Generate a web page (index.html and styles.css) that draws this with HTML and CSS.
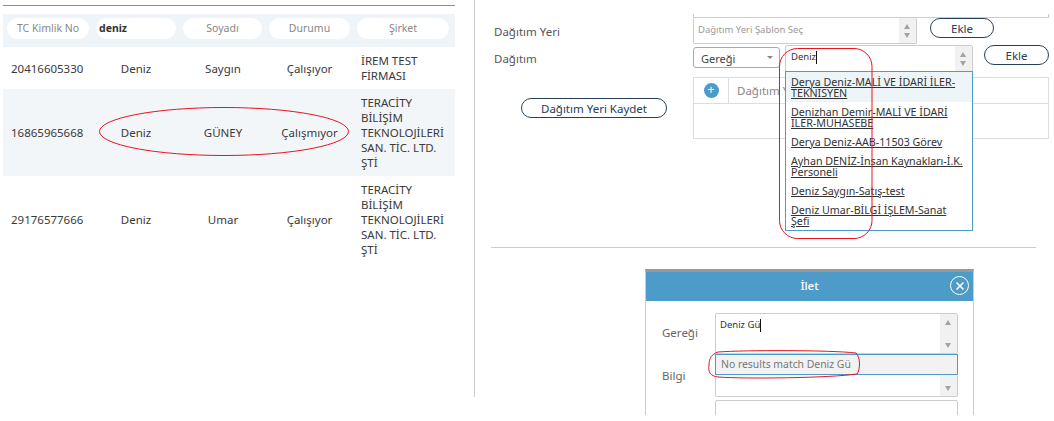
FILE: index.html
```html
<!DOCTYPE html>
<html lang="en">
<head>
    <meta charset="UTF-8">
    <title>Dağıtım</title>
    <link rel="stylesheet" href="styles.css">
</head>
<body>
    <div class="page">
        <!-- left: search results -->
        <section class="left">
            <div class="results-wrap">
                <table class="results">
                    <thead>
                        <tr>
                            <th><span class="pill">TC Kimlik No</span></th>
                            <th><span class="pill pill-typed">deniz</span></th>
                            <th><span class="pill">Soyadı</span></th>
                            <th><span class="pill">Durumu</span></th>
                            <th><span class="pill">Şirket</span></th>
                        </tr>
                    </thead>
                    <tbody>
                        <tr>
                            <td class="tc">20416605330</td><td>Deniz</td><td>Saygın</td><td>Çalışıyor</td>
                            <td class="company">İREM TEST FİRMASI</td>
                        </tr>
                        <tr class="alt">
                            <td class="tc">16865965668</td><td>Deniz</td><td>GÜNEY</td><td>Çalışmıyor</td>
                            <td class="company">TERACİTY BİLİŞİM TEKNOLOJİLERİ SAN. TİC. LTD. ŞTİ</td>
                        </tr>
                        <tr>
                            <td class="tc">29176577666</td><td>Deniz</td><td>Umar</td><td>Çalışıyor</td>
                            <td class="company">TERACİTY BİLİŞİM TEKNOLOJİLERİ SAN. TİC. LTD. ŞTİ</td>
                        </tr>
                    </tbody>
                </table>
            </div>
        </section>

        <!-- right: form and dialog -->
        <section class="right">
            <div class="form">
                <div class="labels">
                    <div class="label-yer">Dağıtım Yeri</div>
                    <div class="label-dag">Dağıtım</div>
                    <button class="btn btn-save">Dağıtım Yeri Kaydet</button>
                </div>
                <div class="fields">
                    <div class="frame-end"></div>
                    <div class="row-sablon">
                        <div class="listbox listbox-sablon">
                            <span class="placeholder">Dağıtım Yeri Şablon Seç</span>
                            <div class="scroller"><i class="up"></i><i class="down"></i></div>
                        </div>
                        <button class="btn btn-ekle">Ekle</button>
                    </div>
                    <div class="row-dagitim">
                        <div class="select">Gereği<i class="caret"></i></div>
                        <div class="listbox listbox-deniz">
                            <span class="typed">Deniz<i class="cursor"></i></span>
                            <div class="scroller"><i class="up"></i><i class="down"></i></div>
                        </div>
                        <button class="btn btn-ekle btn-ekle2">Ekle</button>
                    </div>
                    <div class="grid-box">
                        <div class="grid-head">
                            <div class="grid-add"><span class="plus">+</span></div>
                            <div class="grid-title">Dağıtım Y</div>
                        </div>
                    </div>
                    <ul class="suggest">
                        <li class="active"><a href="#">Derya Deniz-MALİ VE İDARİ İLER-TEKNİSYEN</a></li>
                        <li><a href="#">Denizhan Demir-MALİ VE İDARİ İLER-MUHASEBE</a></li>
                        <li><a href="#">Derya Deniz-AAB-11503 Görev</a></li>
                        <li><a href="#">Ayhan DENİZ-İnsan Kaynakları-İ.K. Personeli</a></li>
                        <li><a href="#">Deniz Saygın-Satış-test</a></li>
                        <li><a href="#">Deniz Umar-BİLGİ İŞLEM-Sanat Şefi</a></li>
                    </ul>
                </div>
            </div>
            <hr class="divider">
            <div class="dialog">
                <div class="dialog-head">
                    <span>İlet</span>
                    <span class="close"><svg width="14" height="14" viewBox="0 0 14 14"><path d="M3.500 3.500l7 7M10.500 3.500l-7 7" stroke="#fff" stroke-width="1.600"/></svg></span>
                </div>
                <div class="dialog-body">
                    <div class="dialog-labels">
                        <div class="label-gerek">Gereği</div>
                        <div class="label-bilgi">Bilgi</div>
                    </div>
                    <div class="dialog-fields">
                        <div class="listbox listbox-gerek">
                            <span class="typed typed-small">Deniz Gü<i class="cursor"></i></span>
                            <div class="scroller"><i class="up"></i><i class="down"></i></div>
                        </div>
                        <div class="no-results">No results match Deniz Gü</div>
                        <div class="listbox listbox-bilgi">
                            <div class="scroller"><i class="down"></i></div>
                        </div>
                        <div class="listbox listbox-last"></div>
                    </div>
                </div>
            </div>
        </section>

        <!-- red marks drawn over the screenshot -->
        <svg class="marks" width="1054" height="421" viewBox="0 0 1054 421" fill="none" stroke="#e8141f" stroke-width="1">
            <ellipse cx="224" cy="131.500" rx="124.500" ry="24"/>
            <rect x="779.500" y="48.500" width="92.500" height="190" rx="18"/>
            <path d="M718 352C745 350 830 350 856 353C861 358 860 370 857 374C830 378 745 379 718 377C710 376 708 372 709 365C709 358 712 354 718 352Z"/>
        </svg>
    </div>
</body>
</html>
```

FILE: styles.css
```css
* {
    margin: 0;
    padding: 0;
    box-sizing: border-box;
}

html, body {
    height: 100%;
    background: #fff;
    overflow: hidden;
}

body {
    font-family: 'Noto Sans', 'DejaVu Sans', sans-serif;
    font-size: 11.500px;
    color: #3a3a3a;
}

.page {
    position: relative;
    display: flex;
    width: 1054px;
    height: 421px;
    overflow: hidden;
}

/* Left table */
.left {
    width: 474px;
    flex-shrink: 0;
    padding: 5px 19px 0 3px;
}

.results-wrap {
    border-top: 1px solid #5b9dc9;
    padding-top: 8px;
}

.results {
    width: 452px;
    border-collapse: collapse;
    table-layout: fixed;
}

.results th {
    background: #eff4f8;
    height: 33px;
    padding: 4px 4px 8px;
    font-weight: normal;
    vertical-align: top;
}

.pill {
    display: block;
    height: 21px;
    line-height: 21px;
    background: #fff;
    border-radius: 11px;
    color: #888;
    text-align: center;
    font-size: 10.500px;
}

.pill-typed {
    text-align: left;
    padding-left: 3px;
    font-size: 10.500px;
    font-weight: bold;
    color: #333;
}

.results th:nth-child(1) { width: 89px; padding-right: 3px; }
.results th:nth-child(2) { width: 88px; }
.results th:nth-child(3) { width: 86px; padding-left: 3px; }
.results th:nth-child(4) { width: 87px; padding-left: 3px; padding-right: 3px; }
.results th:nth-child(5) { width: 102px; padding-right: 6px; }

.results td {
    text-align: center;
    line-height: 15px;
    padding: 6px 0;
    vertical-align: middle;
}

.results td.tc {
    text-align: left;
    padding-left: 8px;
}

.results td.company {
    text-align: left;
    padding: 6px 4px 6px 8px;
}

.results tr.alt td {
    background: #f3f6f9;
}

/* Right side */
.right {
    width: 580px;
    border-left: 1px solid #ccc;
    height: 397px;
    padding-top: 17px;
}

.form {
    display: flex;
    height: 215px;
    padding-left: 19px;
}

.labels {
    width: 199px;
    flex-shrink: 0;
    color: #555;
}

.label-yer {
    margin-top: 7px;
}

.label-dag {
    margin-top: 12px;
}

.btn {
    display: block;
    height: 20px;
    background: #fff;
    border: 1px solid #24405a;
    border-radius: 10px;
    font: inherit;
    color: #24405a;
}

.btn-save {
    width: 146px;
    margin: 32px 0 0 27px;
}

.fields {
    position: relative;
    width: 361px;
    margin-top: -3px;
}

/* end of the box cut off at the top */
.frame-end {
    width: 356px;
    height: 4px;
    border: 1px solid #ccc;
    border-top: 0;
}

.row-sablon {
    display: flex;
    align-items: flex-start;
    height: 27px;
}

.listbox {
    position: relative;
    background: #fff;
    border: 1px solid #ccc;
    border-radius: 2px;
}

.listbox-sablon {
    width: 224px;
    height: 26px;
    border-top: 0;
}

.placeholder {
    display: block;
    padding: 5px 4px;
    font-size: 9.500px;
    color: #999;
}

.scroller {
    position: absolute;
    top: 0;
    right: 0;
    bottom: 0;
    width: 17px;
    background: #f1f1f1;
}

.up, .down {
    position: absolute;
    left: 5px;
    width: 0;
    height: 0;
    border-left: 3.500px solid transparent;
    border-right: 3.500px solid transparent;
}

.up {
    top: 6px;
    border-bottom: 5px solid #a3a3a3;
}

.down {
    bottom: 5px;
    border-top: 5px solid #a3a3a3;
}

.btn-ekle {
    width: 64px;
    margin: 0 0 0 13px;
}

.row-dagitim {
    display: flex;
    align-items: flex-start;
    height: 32px;
}

.select {
    position: relative;
    width: 87px;
    height: 21px;
    margin-top: 2px;
    line-height: 21px;
    padding-left: 7px;
    border: 1px solid #aaa;
    border-radius: 3px;
    font-size: 11px;
    color: #444;
}

.caret {
    position: absolute;
    top: 8px;
    right: 6px;
    width: 0;
    height: 0;
    border-left: 3px solid transparent;
    border-right: 3px solid transparent;
    border-top: 3px solid #888;
}

.listbox-deniz {
    width: 188px;
    height: 27px;
    margin-left: 5px;
}

.typed {
    display: block;
    padding: 5px;
    font-size: 9.500px;
    line-height: 12px;
    color: #333;
}

.typed-small {
    padding: 5px 4px;
}

.cursor {
    display: inline-block;
    width: 1px;
    height: 13px;
    background: #111;
    vertical-align: top;
}

.btn-ekle2 {
    margin: 0 0 0 11px;
    width: 65px;
}

.grid-box {
    width: 356px;
    height: 62px;
    border: 1px solid #ddd;
}

.grid-head {
    display: flex;
    height: 26px;
    border-bottom: 1px solid #ddd;
}

.grid-add {
    width: 35px;
    display: flex;
    align-items: center;
    justify-content: center;
    border-right: 1px solid #ddd;
}

.plus {
    width: 15px;
    height: 15px;
    border-radius: 50%;
    background: #4c9bc9;
    color: #fff;
    text-align: center;
    line-height: 14px;
    font-size: 12px;
}

.grid-title {
    padding: 5px 8px;
    color: #888;
}

/* Autocomplete list, lies over the grid */
.suggest {
    position: absolute;
    top: 57px;
    left: 92px;
    width: 188px;
    list-style: none;
    background: #fff;
    border: 1px solid #4c9bc9;
    font-size: 10.700px;
    line-height: 11px;
}

.suggest li {
    padding: 5px 5px 3px;
}

.suggest li.active {
    background: #eef5f9;
}

.suggest a {
    color: #333;
}

.divider {
    border: 0;
    border-top: 1px solid #ccc;
    width: 545px;
    margin: 15px 0 0 16px;
}

/* Dialog */
.dialog {
    width: 329px;
    margin: 21px 0 0 170px;
    border-top: 3px solid #999;
    border-left: 1px solid #ccc;
    border-right: 1px solid #ccc;
}

.dialog-head {
    position: relative;
    height: 29px;
    background: #4c9bc9;
    color: #fff;
    font-weight: 500;
    text-align: center;
    line-height: 27px;
}

.close {
    position: absolute;
    top: 4px;
    right: 4px;
    width: 19px;
    height: 19px;
    border: 1px solid #fff;
    border-radius: 50%;
    display: flex;
    align-items: center;
    justify-content: center;
}

.dialog-body {
    display: flex;
    height: 114px;
    padding-top: 12px;
    overflow: hidden;
}

.dialog-labels {
    width: 69px;
    flex-shrink: 0;
    padding-left: 16px;
    color: #666;
}

.label-gerek {
    margin-top: 12px;
}

.label-bilgi {
    margin-top: 28px;
}

.dialog-fields {
    position: relative;
    width: 243px;
}

.listbox-gerek {
    height: 41px;
}

.no-results {
    height: 21px;
    line-height: 19px;
    background: #f2f2f2;
    border: 1px solid #4c9bc9;
    padding-left: 5px;
    font-size: 10.400px;
    color: #777;
}

.listbox-bilgi {
    height: 22px;
    border-top: 0;
}

.listbox-last {
    height: 40px;
    margin-top: 3px;
}

/* Red marks */
.marks {
    position: absolute;
    top: 0;
    left: 0;
    pointer-events: none;
}
```
